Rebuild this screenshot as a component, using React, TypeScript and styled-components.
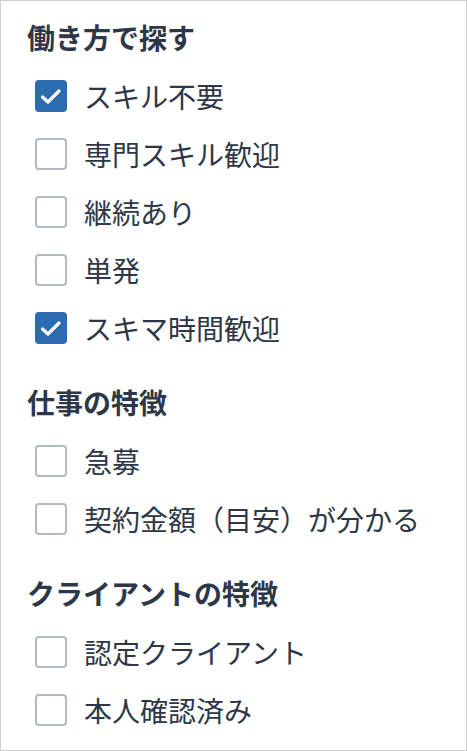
import React, { useState } from "react";
import styled, { createGlobalStyle } from "styled-components";

const GlobalStyle = createGlobalStyle`
  html, body { margin: 0; padding: 0; background: #ffffff; }
  * { box-sizing: border-box; }
  body {
    font-family: "Noto Sans CJK JP", "Noto Sans", sans-serif;
    color: #2d3748;
  }
`;

const Frame = styled.div`
  width: 467px;
  height: 751px;
  border: 1px solid #cfcfcf;
  padding: 16px 0 0 26px;
  display: flex;
  flex-direction: column;
  gap: 34px;
  overflow: hidden;
`;

const Section = styled.section`
  display: flex;
  flex-direction: column;
`;

const Title = styled.h2`
  margin: 0 0 19px 0;
  font-size: 28px;
  line-height: 40px;
  font-weight: 700;
  color: #2d3748;
`;

const List = styled.div`
  display: flex;
  flex-direction: column;
  gap: 18px;
  padding-left: 8px;
`;

const Row = styled.label`
  display: flex;
  align-items: center;
  height: 40px;
  gap: 17px;
  cursor: pointer;
`;

const HiddenInput = styled.input`
  position: absolute;
  opacity: 0;
  width: 0;
  height: 0;
`;

const Box = styled.span<{ $checked: boolean }>`
  width: 32px;
  height: 32px;
  flex: 0 0 32px;
  border-radius: 4px;
  border: 2px solid ${(p) => (p.$checked ? "#2b6cb0" : "#b4bac4")};
  background: ${(p) => (p.$checked ? "#2b6cb0" : "#ffffff")};
  display: flex;
  align-items: center;
  justify-content: center;
`;

const Label = styled.span`
  font-size: 28px;
  line-height: 40px;
  font-weight: 400;
  color: #2d3748;
  white-space: nowrap;
`;

const Check = () => (
  <svg width="32" height="32" viewBox="0 0 32 32" style={{ margin: -2 }}>
    <polyline
      points="7.5,17 13,22 24,11"
      fill="none"
      stroke="#ffffff"
      strokeWidth="3.2"
      strokeLinecap="round"
      strokeLinejoin="round"
    />
  </svg>
);

type Item = { label: string; checked: boolean };
type Group = { title: string; items: Item[] };

const initial: Group[] = [
  {
    title: "働き方で探す",
    items: [
      { label: "スキル不要", checked: true },
      { label: "専門スキル歓迎", checked: false },
      { label: "継続あり", checked: false },
      { label: "単発", checked: false },
      { label: "スキマ時間歓迎", checked: true },
    ],
  },
  {
    title: "仕事の特徴",
    items: [
      { label: "急募", checked: false },
      { label: "契約金額（目安）が分かる", checked: false },
    ],
  },
  {
    title: "クライアントの特徴",
    items: [
      { label: "認定クライアント", checked: false },
      { label: "本人確認済み", checked: false },
    ],
  },
];

export default function App() {
  const [groups, setGroups] = useState<Group[]>(initial);

  const toggle = (gi: number, ii: number) => {
    setGroups((prev) =>
      prev.map((g, a) =>
        a !== gi
          ? g
          : {
              ...g,
              items: g.items.map((it, b) =>
                b === ii ? { ...it, checked: !it.checked } : it
              ),
            }
      )
    );
  };

  return (
    <>
      <GlobalStyle />
      <Frame>
        {groups.map((g, gi) => (
          <Section key={g.title}>
            <Title>{g.title}</Title>
            <List>
              {g.items.map((it, ii) => (
                <Row key={it.label}>
                  <HiddenInput
                    type="checkbox"
                    checked={it.checked}
                    onChange={() => toggle(gi, ii)}
                  />
                  <Box $checked={it.checked}>{it.checked && <Check />}</Box>
                  <Label>{it.label}</Label>
                </Row>
              ))}
            </List>
          </Section>
        ))}
      </Frame>
    </>
  );
}
